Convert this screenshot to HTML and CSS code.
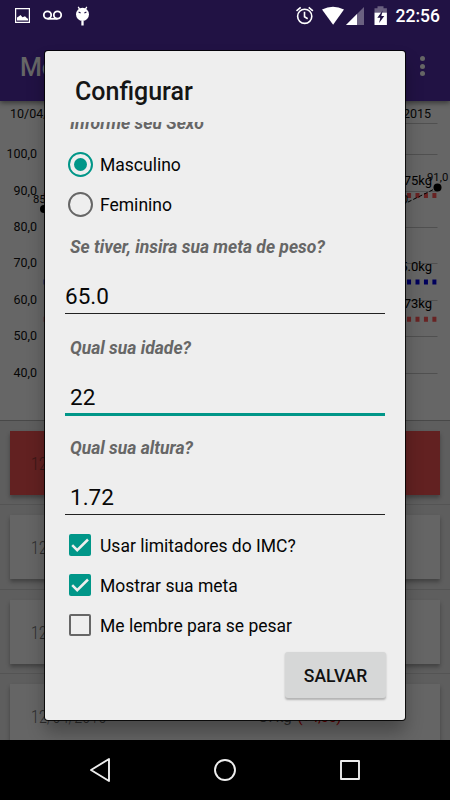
FILE: index.html
```html
<!DOCTYPE html>
<html lang="pt">
<head>
<meta charset="utf-8">
<title>Configurar</title>
<link rel="stylesheet" href="styles.css">
</head>
<body>
<div class="screen">
  <header class="top">
    <div class="status">
      <svg class="notifications" width="100" height="30" viewBox="0 0 100 30">
        <path d="M15.6 8.6h13.8v13.8H15.6z" fill="none" stroke="#fff" stroke-width="1.2"/>
        <path d="M17 20.5v-3l2-1.2 1.5-1.3 2 2.2 2.5-1 2 2 1 .5v1.8z" fill="#fff"/>
        <g fill="none" stroke="#fff" stroke-width="1.8"><circle cx="47.5" cy="15" r="3.7"/><circle cx="57.5" cy="15" r="3.7"/><path d="M47.5 18.8h10"/></g>
        <ellipse cx="82.5" cy="14.300" rx="6.500" ry="6.600" fill="#fff"/>
        <path d="M78.200 6.800l1.800 3M86.800 6.800l-1.800 3" stroke="#fff" stroke-width="1.300"/>
        <path d="M82.5 21v4.5" stroke="#fff" stroke-width="2.3"/>
        <path d="M78.600 12l2 1M86.400 12l-2 1" stroke="#211244" stroke-width="1.2"/>
      </svg>
      <svg class="system" width="100" height="30" viewBox="290 0 100 30">
        <g fill="none" stroke="#fff" stroke-width="1.6"><circle cx="304.7" cy="16.3" r="7.1"/><path d="M304.5 11.8v5l3.2 2M296.5 10.8l4.2-3.5M312.9 10.8l-4.2-3.5"/></g>
        <path d="M322 9.6q11-5.6 22 0L333.1 24.7z" fill="#fff"/>
        <path d="M364 7v18h-18z" fill="#6a6080"/><path d="M357 14v11h-11z" fill="#fff"/>
        <path d="M374.5 8.3h3V6.2h6v2.1h3.4V13h-12.4z" fill="#6a6080"/><path d="M374.5 12.7h12.4V25h-12.4z" fill="#fff"/>
        <path d="M382.7 10.5l-5.4 7.2h3l-1.2 5.2 5.2-7h-3z" fill="#211244"/>
      </svg>
      <span class="clock">22:56</span>
    </div>
    <div class="appbar">
      <span class="app-title">Me</span>
      <span class="overflow"><i></i><i></i><i></i></span>
    </div>
  </header>
  <main class="content">
    <section class="chart">
      <svg width="450" height="320" viewBox="0 101 450 320">
        <g stroke="#505050" stroke-width="1"><path d="M44 123.5H437.500M44 154.500H437.500M44 191.500H437.500M44 227.500H437.500M44 263.500H437.500M44 300.500H437.500M44 336.500H437.500M44 373.500H437.500M44.500 123V391"/></g>
        <g class="axis">
          <text x="10" y="118">10/04/2015</text><text x="431" y="118" text-anchor="end">12/04/2015</text>
          <g text-anchor="end"><text x="37" y="158">100,0</text><text x="37" y="195">90,0</text><text x="37" y="231">80,0</text><text x="37" y="267">70,0</text><text x="37" y="304">60,0</text><text x="37" y="340">50,0</text><text x="37" y="377">40,0</text></g>
        </g>
        <g fill="none" stroke-width="5" stroke-dasharray="4 4.450"><path d="M43.700 195.600H437.300" stroke="#682323"/><path d="M43.700 282H437.300" stroke="#00005c"/><path d="M43.700 319.300H437.300" stroke="#682323"/></g>
        <path d="M44 209L240 222 400 206 437.500 187.500" fill="none" stroke="#000" stroke-width="1" stroke-dasharray="4 2"/>
        <circle cx="44" cy="209" r="4"/><circle cx="437.500" cy="187.500" r="4"/>
        <g class="values"><text x="33" y="203">85,0</text><text x="427" y="181">91,0</text><text x="408" y="203" text-anchor="end">87,0</text></g>
        <g class="limits" text-anchor="end"><text x="432" y="184.500">75kg</text><text x="432" y="271">65.0kg</text><text x="432" y="308">73kg</text></g>
      </svg>
    </section>
    <ul class="entries">
      <li><article class="entry alert"><span class="date">12/04/2015</span></article></li>
      <li><article class="entry"><span class="date">12/04/2015</span></article></li>
      <li><article class="entry"><span class="date">12/04/2015</span></article></li>
      <li><article class="entry"><span class="date">12/04/2015</span><span class="weight">87kg <em>(+4,00)</em></span></article></li>
    </ul>
  </main>
  <nav class="navbar">
    <svg width="450" height="60" viewBox="0 740 450 60" fill="none" stroke="#eee" stroke-width="1.900" stroke-linejoin="round">
      <path d="M109 759v22l-18-11z"/><circle cx="225" cy="770" r="10"/><path d="M341 761h18v18h-18z"/>
    </svg>
  </nav>
</div>
<form class="dialog">
  <h1>Configurar</h1>
  <div class="scroll">
    <p class="label first">Informe seu Sexo</p>
    <label class="option"><span class="radio on"></span><span class="text">Masculino</span></label>
    <label class="option last"><span class="radio"></span><span class="text">Feminino</span></label>
    <p class="label">Se tiver, insira sua meta de peso?</p>
    <div class="field flush">65.0</div>
    <p class="label">Qual sua idade?</p>
    <div class="field focus">22</div>
    <p class="label">Qual sua altura?</p>
    <div class="field">1.72</div>
    <label class="option check"><span class="box on"><svg width="22" height="22" viewBox="0 0 22 22"><path d="M3.200 11.200l5 5L19 5.500" fill="none" stroke="#eee" stroke-width="2.500"/></svg></span><span class="text">Usar limitadores do IMC?</span></label>
    <label class="option check"><span class="box on"><svg width="22" height="22" viewBox="0 0 22 22"><path d="M3.200 11.200l5 5L19 5.500" fill="none" stroke="#eee" stroke-width="2.500"/></svg></span><span class="text">Mostrar sua meta</span></label>
    <label class="option check"><span class="box"></span><span class="text">Me lembre para se pesar</span></label>
    <button class="save" type="button">SALVAR</button>
  </div>
</form>
</body>
</html>
```
FILE: styles.css
```css
* { box-sizing: border-box; }
body { margin: 0; width: 450px; height: 800px; overflow: hidden; position: relative; font-family: Roboto, sans-serif; background: #000; }
.screen { display: flex; flex-direction: column; height: 800px; }
.top { height: 101px; flex: none; background: #211244; box-shadow: 0 2px 5px rgba(0,0,0,.45); z-index: 1; }
.status { height: 30px; display: flex; }
.notifications { margin-right: 190px; flex: none; }
.system { flex: none; }
.clock { color: #fff; font-weight: 500; font-size: 17.5px; line-height: 33px; margin-left: 5.500px; }
.appbar { height: 71px; display: flex; justify-content: space-between; align-items: center; padding: 0 25px 0 20px; }
.app-title { color: #666; font-size: 25px; font-weight: 500; line-height: 30px; padding-top: 4px; }
.overflow { display: flex; flex-direction: column; gap: 2.500px; padding-top: 1px; }
.overflow i { width: 5px; height: 5px; border-radius: 50%; background: #666; }
.content { height: 639px; flex: none; overflow: hidden; background: #5e5e5e; }
.chart { height: 320px; background: #666; border-bottom: 1px solid #484848; }
.chart svg { display: block; }
.axis { font-size: 12.5px; fill: #070707; }
.values { font-size: 11.3px; fill: #070707; }
.limits { font-size: 13px; fill: #000; }
.entries { list-style: none; margin: 0; padding: 0; }
.entries li { height: 84.300px; padding: 10px 10px 0; border-bottom: 1px solid #545454; }
.entry { height: 64px; background: #656565; display: flex; align-items: center; padding-left: 21px; box-shadow: 0 3px 4px rgba(0,0,0,.3); color: #2b2b2b; }
.entry.alert { background: #622121; color: #381616; }
.date { width: 228px; font-size: 17.5px; font-weight: 300; line-height: 20px; padding-top: 2px; transform: scaleX(.82); transform-origin: left; }
.weight { font-size: 15px; line-height: 20px; padding-top: 2px; white-space: pre; }
.weight em { color: #650000; font-style: normal; margin-left: 2px; letter-spacing: -.5px; }
.navbar { height: 60px; background: #000; }
.navbar svg { display: block; }
.dialog { position: absolute; z-index: 2; left: 45px; top: 51px; width: 360px; height: 669px; background: #eee; border-radius: 3px; box-shadow: 0 0 0 1px rgba(0,0,0,.85), 0 12px 18px rgba(0,0,0,.3); }
.dialog h1 { margin: 0; height: 71px; padding: 26px 0 0 30px; font-size: 25px; line-height: 30px; font-weight: 500; color: #151515; }
.scroll { height: 598px; overflow: hidden; padding: 0 19px 0 20px; display: flex; flex-direction: column; }
.label { margin: 0; height: 25px; padding-left: 5px; font-size: 17.5px; line-height: 26px; font-weight: 700; font-style: italic; color: #666; flex: none; white-space: nowrap; }
.label.first { margin-top: -12px; height: 34px; }
.option { display: flex; align-items: center; height: 40px; flex: none; font-size: 17.5px; color: #050505; padding-left: 2.500px; }
.option .text { padding-top: 1px; }
.option.last { margin-bottom: 10px; }
.radio { width: 25px; height: 25px; border: 2.500px solid #666; border-radius: 50%; margin-right: 7.500px; display: flex; align-items: center; justify-content: center; }
.radio.on { border-color: #009688; }
.radio.on::after { content: ""; width: 13px; height: 13px; border-radius: 50%; background: #009688; }
.field { flex: none; width: 320px; height: 55px; margin-bottom: 20.500px; border-bottom: 1px solid #222; font-size: 22.5px; line-height: 28px; padding: 23px 0 0 5px; color: #080808; }
.field.flush { padding-left: 0; }
.field.focus { border-bottom: 3px solid #009688; height: 56px; margin-bottom: 19.500px; }
.field:nth-of-type(3) { margin-bottom: 10px; }
.check { padding-left: 4px; }
.box { width: 22px; height: 22px; border: 2px solid #666; border-radius: 2px; margin-right: 9px; }
.box.on { border: 0; background: #009688; }
.box svg { display: block; }
.save { align-self: flex-end; width: 101px; height: 46px; flex: none; margin-top: 7px; border: 0; border-radius: 3px; background: #d6d7d7; box-shadow: 0 1.500px 2px rgba(0,0,0,.25); font: 500 17.5px Roboto, sans-serif; color: #111; padding-top: 3px; }
```
